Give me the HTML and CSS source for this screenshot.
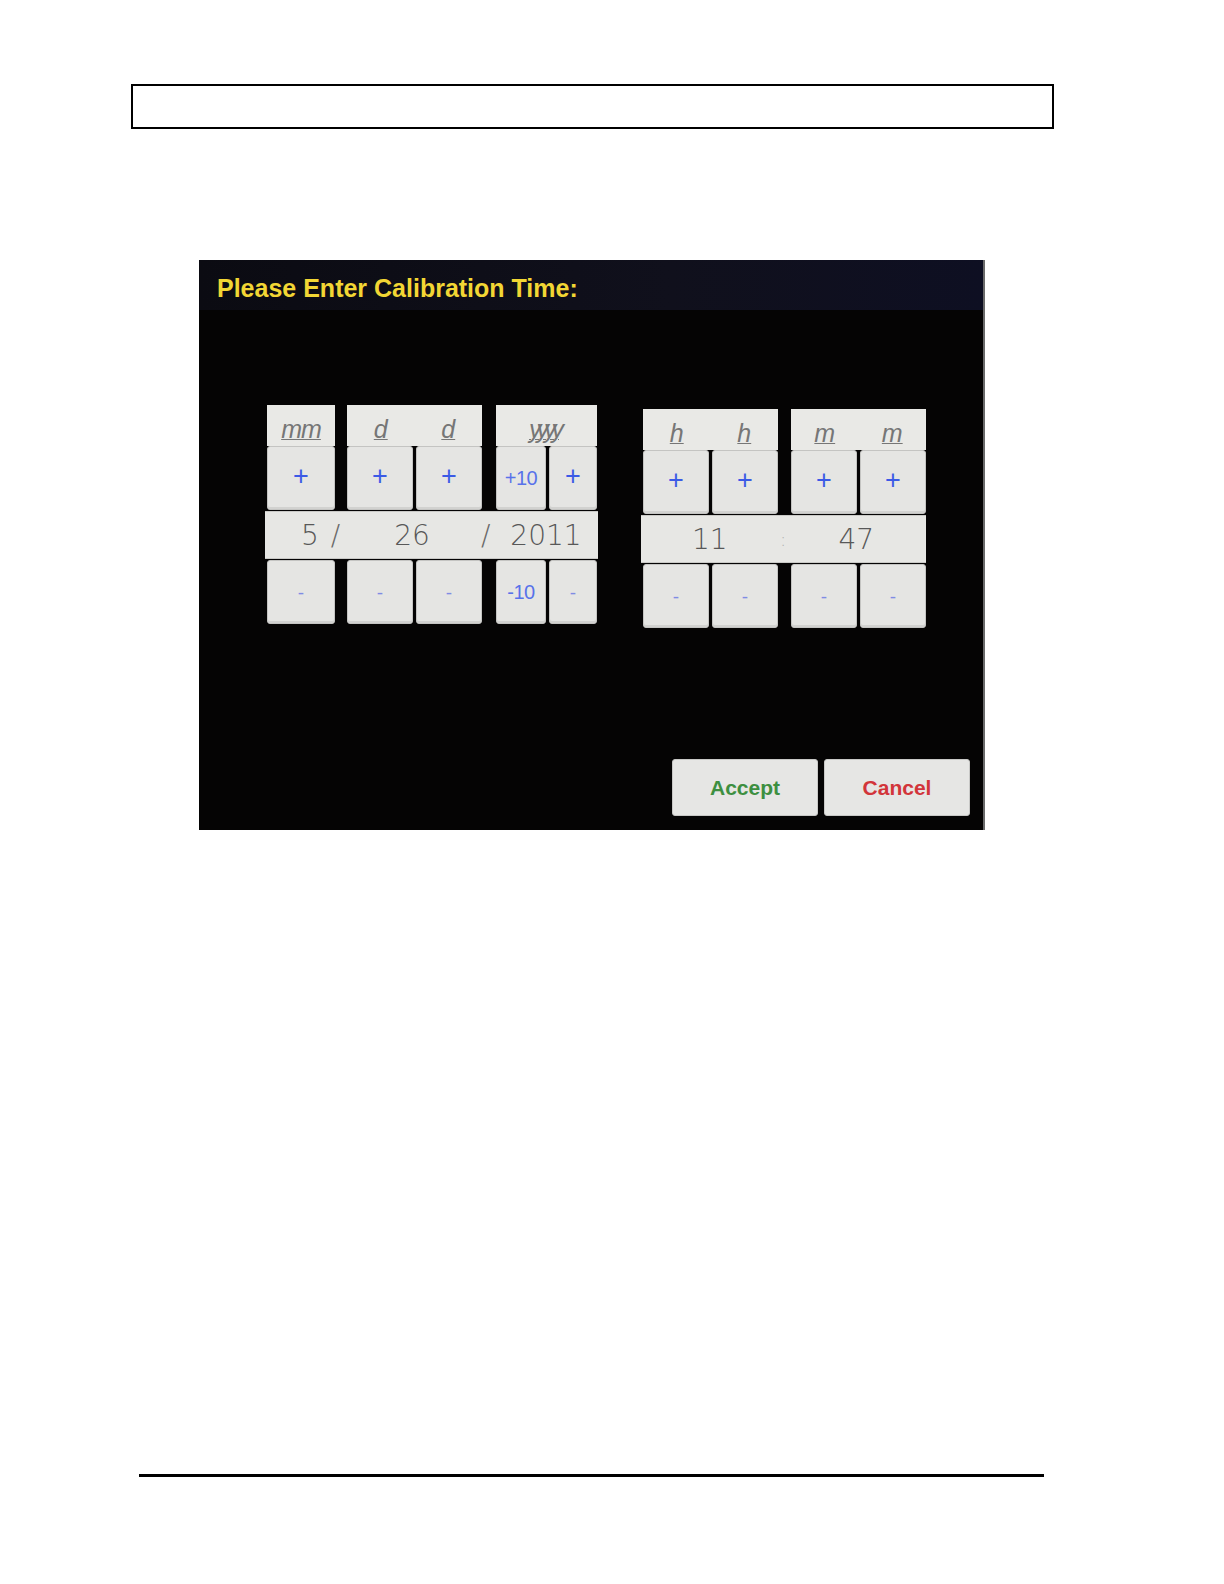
FILE: index.html
```html
<!DOCTYPE html>
<html>
<head>
<meta charset="utf-8">
<link rel="stylesheet" href="styles.css">
</head>
<body>
<div class="page">
  <div class="headbox"></div>
  <div class="shot">
    <div class="titlebar"><span class="title">Please Enter Calibration Time:</span></div>
    <div class="controls">
      <div class="group date">
        <div class="row heads">
          <div class="head w-mm"><span class="lbl">mm</span></div>
          <div class="head w-dd"><span class="lbl">d</span><span class="lbl">d</span></div>
          <div class="head w-yy"><span class="lbl yy">yyyy</span></div>
        </div>
        <div class="row btns">
          <div class="btn b-mm plus">+</div>
          <div class="pair w-dd"><div class="btn b-d plus">+</div><div class="btn b-d plus">+</div></div>
          <div class="pair w-yy"><div class="btn b-y10 ten">+10</div><div class="btn b-y1 plus">+</div></div>
        </div>
        <div class="value">
          <span class="v" style="margin-left:36px">5</span>
          <span class="v slash" style="margin-left:12px">/</span>
          <span class="v" style="margin-left:54px">26</span>
          <span class="v slash" style="margin-left:51px">/</span>
          <span class="v" style="margin-left:20px">2011</span>
        </div>
        <div class="row btns">
          <div class="btn b-mm minus">-</div>
          <div class="pair w-dd"><div class="btn b-d minus">-</div><div class="btn b-d minus">-</div></div>
          <div class="pair w-yy"><div class="btn b-y10 ten">-10</div><div class="btn b-y1 minus">-</div></div>
        </div>
      </div>
      <div class="group time">
        <div class="row heads">
          <div class="head w-dd"><span class="lbl">h</span><span class="lbl">h</span></div>
          <div class="head w-dd"><span class="lbl">m</span><span class="lbl">m</span></div>
        </div>
        <div class="row btns">
          <div class="pair w-dd"><div class="btn b-d plus">+</div><div class="btn b-d plus">+</div></div>
          <div class="pair w-dd"><div class="btn b-d plus">+</div><div class="btn b-d plus">+</div></div>
        </div>
        <div class="value">
          <span class="v" style="margin-left:51px">11</span>
          <span class="v colon" style="margin-left:52px">:</span>
          <span class="v" style="margin-left:52px">47</span>
        </div>
        <div class="row btns">
          <div class="pair w-dd"><div class="btn b-d minus">-</div><div class="btn b-d minus">-</div></div>
          <div class="pair w-dd"><div class="btn b-d minus">-</div><div class="btn b-d minus">-</div></div>
        </div>
      </div>
    </div>
    <div class="actions">
      <div class="act accept">Accept</div>
      <div class="act cancel">Cancel</div>
    </div>
  </div>
  <div class="rule"></div>
</div>
</body>
</html>
```

FILE: styles.css
```css
html, body {
  margin: 0;
  padding: 0;
  background: #ffffff;
}
.page {
  padding-top: 84px;
  font-family: "Liberation Sans", Arial, sans-serif;
}
.headbox {
  margin-left: 131px;
  width: 923px;
  height: 45px;
  border: 2px solid #000;
  box-sizing: border-box;
}
.shot {
  margin-top: 131px;
  margin-left: 199px;
  width: 786px;
  height: 570px;
  background: #050404;
  border-right: 2px solid #6a6a6a;
  box-sizing: border-box;
  display: flex;
  flex-direction: column;
}
.titlebar {
  height: 50px;
  background: linear-gradient(90deg, #0b0b12 0%, #10101c 60%, #0e0f22 100%);
  padding-left: 18px;
  display: flex;
  align-items: center;
}
.title {
  color: #f2d634;
  font-family: "Liberation Sans", Arial, sans-serif;
  font-weight: bold;
  font-size: 25px;
  letter-spacing: 0;
  margin-top: 6px;
}
.controls {
  margin-top: 95px;
  padding-left: 66px;
  display: flex;
  align-items: flex-start;
  gap: 43px;
}
.group {
  display: flex;
  flex-direction: column;
}
.date { width: 333px; }
.time { width: 285px; margin-top: 4px; }
.row {
  display: flex;
  padding-left: 2px;
}
.date .row > :nth-child(2) { margin-left: 12px; }
.date .row > :nth-child(3) { margin-left: 14px; }
.time .row > :nth-child(2) { margin-left: 13px; }
.heads { height: 41px; }
.head {
  background: #e9e9e6;
  display: flex;
  align-items: flex-end;
  justify-content: space-around;
  padding-bottom: 4px;
  box-sizing: border-box;
}
.w-mm { width: 68px; }
.w-dd { width: 135px; }
.w-yy { width: 101px; }
.lbl {
  font-family: "Liberation Sans", Arial, sans-serif;
  font-style: italic;
  font-size: 25px;
  color: #767676;
  text-decoration: underline;
  text-decoration-thickness: 1px;
  text-underline-offset: 1px;
  line-height: 1;
}
.head.w-mm .lbl { letter-spacing: -1px; }
.head.w-dd .lbl { flex: 1; text-align: center; }
.yy { letter-spacing: -5px; padding-right: 5px; }
.btns { height: 64px; }
.pair {
  display: flex;
  gap: 3px;
}
.btn {
  background: #e5e5e3;
  border: 1px solid #c4c4c2;
  border-radius: 3px;
  box-sizing: border-box;
  height: 64px;
  display: flex;
  align-items: center;
  justify-content: center;
  color: #3b5ae6;
  font-family: "Liberation Sans", Arial, sans-serif;
  box-shadow: inset 0 -2px 0 #d2d2d0;
}
.b-mm { width: 68px; }
.b-d { width: 66px; }
.b-y10 { width: 50px; }
.b-y1 { width: 48px; }
.plus { font-size: 27px; padding-bottom: 3px; }
.minus { font-size: 19px; color: #7f8ce4; padding-top: 2px; }
.ten { font-size: 20px; color: #5872ea; letter-spacing: -0.5px; }
.value {
  height: 48px;
  background: #e7e7e4;
  border-top: 1px solid #c9c9c6;
  border-bottom: 1px solid #c9c9c6;
  box-sizing: border-box;
  display: flex;
  align-items: center;
  margin-top: 1px;
  margin-bottom: 1px;
}
.v {
  font-family: "DejaVu Sans", "Liberation Sans", sans-serif;
  font-weight: 300;
  font-size: 28px;
  color: #585858;
}
.slash { color: #6a6a6a; }
.colon { color: #b0b0ae; font-size: 20px; }
.actions {
  margin-top: auto;
  margin-bottom: 11px;
  margin-right: 13px;
  display: flex;
  justify-content: flex-end;
  gap: 6px;
}
.act {
  width: 146px;
  height: 57px;
  background: #e6e6e4;
  border: 1px solid #c8c8c6;
  border-radius: 3px;
  box-sizing: border-box;
  display: flex;
  align-items: center;
  justify-content: center;
  font-family: "Liberation Sans", Arial, sans-serif;
  font-weight: bold;
  font-size: 21px;
}
.accept { color: #3d8f40; margin-bottom: 3px; }
.cancel { color: #d2353a; }
.rule {
  margin-top: 644px;
  margin-left: 139px;
  width: 905px;
  height: 3px;
  background: #000;
}
```
